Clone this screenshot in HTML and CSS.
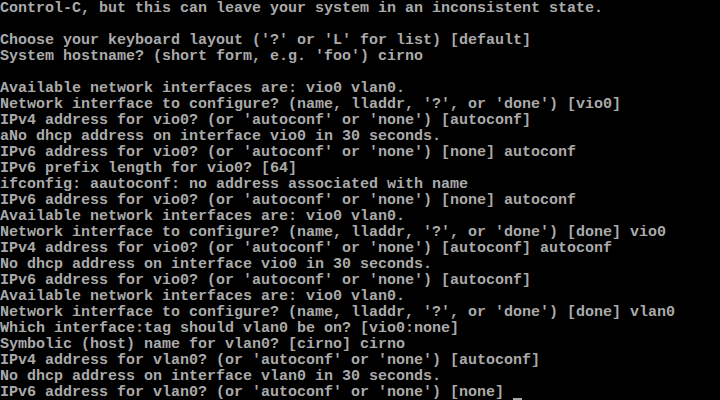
FILE: index.html
```html
<!DOCTYPE html>
<html lang="en">
<head>
<meta charset="utf-8">
<title>Console</title>
<link rel="stylesheet" href="styles.css">
</head>
<body>
<pre class="console">Control-C, but this can leave your system in an inconsistent state.

Choose your keyboard layout ('?' or 'L' for list) [default]
System hostname? (short form, e.g. 'foo') cirno

Available network interfaces are: vio0 vlan0.
Network interface to configure? (name, lladdr, '?', or 'done') [vio0]
IPv4 address for vio0? (or 'autoconf' or 'none') [autoconf]
aNo dhcp address on interface vio0 in 30 seconds.
IPv6 address for vio0? (or 'autoconf' or 'none') [none] autoconf
IPv6 prefix length for vio0? [64]
ifconfig: aautoconf: no address associated with name
IPv6 address for vio0? (or 'autoconf' or 'none') [none] autoconf
Available network interfaces are: vio0 vlan0.
Network interface to configure? (name, lladdr, '?', or 'done') [done] vio0
IPv4 address for vio0? (or 'autoconf' or 'none') [autoconf] autoconf
No dhcp address on interface vio0 in 30 seconds.
IPv6 address for vio0? (or 'autoconf' or 'none') [autoconf]
Available network interfaces are: vio0 vlan0.
Network interface to configure? (name, lladdr, '?', or 'done') [done] vlan0
Which interface:tag should vlan0 be on? [vio0:none]
Symbolic (host) name for vlan0? [cirno] cirno
IPv4 address for vlan0? (or 'autoconf' or 'none') [autoconf]
No dhcp address on interface vlan0 in 30 seconds.
IPv6 address for vlan0? (or 'autoconf' or 'none') [none] <span class="cursor"></span></pre>
</body>
</html>
```
FILE: styles.css
```css
html, body {
  margin: 0;
  padding: 0;
  background: #000;
}
body {
  width: 720px;
  height: 400px;
  overflow: hidden;
}
.console {
  margin: 0;
  padding: 1px 0 0 0;
  font-family: "Liberation Mono", "DejaVu Sans Mono", monospace;
  font-size: 15px;
  font-weight: bold;
  line-height: 16px;
  color: #aaaaaa;
  white-space: pre;
}
.cursor {
  display: inline-block;
  width: 9px;
  height: 15px;
  vertical-align: top;
  box-shadow: inset 0 -2px 0 #aaaaaa;
}
```
